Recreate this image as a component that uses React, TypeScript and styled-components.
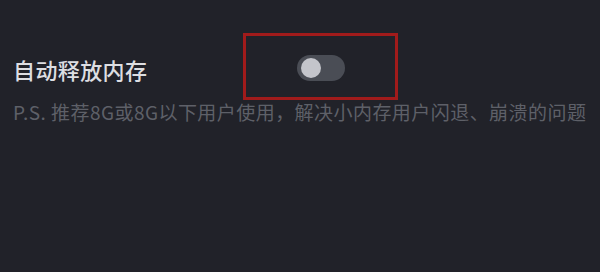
import React, { useState } from "react";
import styled, { createGlobalStyle } from "styled-components";

const GlobalStyle = createGlobalStyle`
    html, body {
        margin: 0;
        padding: 0;
        background: #212229;
    }
    body {
        font-family: "Noto Sans CJK SC", "Noto Sans", sans-serif;
    }
`;

const App: React.FC = () => {
    const [on, setOn] = useState(false);

    return (
        <Page>
            <GlobalStyle />
            <Row>
                <Title>自动释放内存</Title>
                <Highlight>
                    <Track $on={on} onClick={() => setOn(!on)}>
                        <Knob $on={on} />
                    </Track>
                </Highlight>
            </Row>
            <Hint>P.S. 推荐8G或8G以下用户使用，解决小内存用户闪退、崩溃的问题</Hint>
        </Page>
    );
};

const Page = styled.div`
    width: 600px;
    height: 272px;
    box-sizing: border-box;
    padding: 33px 0 0 13px;
    background: #212229;
`;

const Row = styled.div`
    display: flex;
    align-items: center;
`;

const Title = styled.div`
    flex: 0 0 230px;
    padding-top: 5px;
    font-size: 22px;
    letter-spacing: 0.4px;
    font-weight: 500;
    color: #dddee2;
    white-space: nowrap;
`;

const Highlight = styled.div`
    width: 155px;
    height: 67px;
    box-sizing: border-box;
    border: 3px solid #a11b1b;
    display: flex;
    align-items: center;
    justify-content: center;
`;

const Track = styled.div<{ $on: boolean }>`
    position: relative;
    width: 48px;
    height: 26px;
    margin-top: 2px;
    border-radius: 13px;
    background: ${(p) => (p.$on ? "#3d7bf5" : "#4a4d55")};
    cursor: pointer;
`;

const Knob = styled.div<{ $on: boolean }>`
    position: absolute;
    top: 3px;
    left: ${(p) => (p.$on ? "25px" : "4px")};
    width: 20px;
    height: 20px;
    border-radius: 50%;
    background: #c4c5cb;
    transition: left 0.2s ease;
`;

const Hint = styled.div`
    font-size: 19px;
    line-height: 24px;
    letter-spacing: 0.45px;
    color: #5e6068;
    white-space: nowrap;
`;

export default App;
